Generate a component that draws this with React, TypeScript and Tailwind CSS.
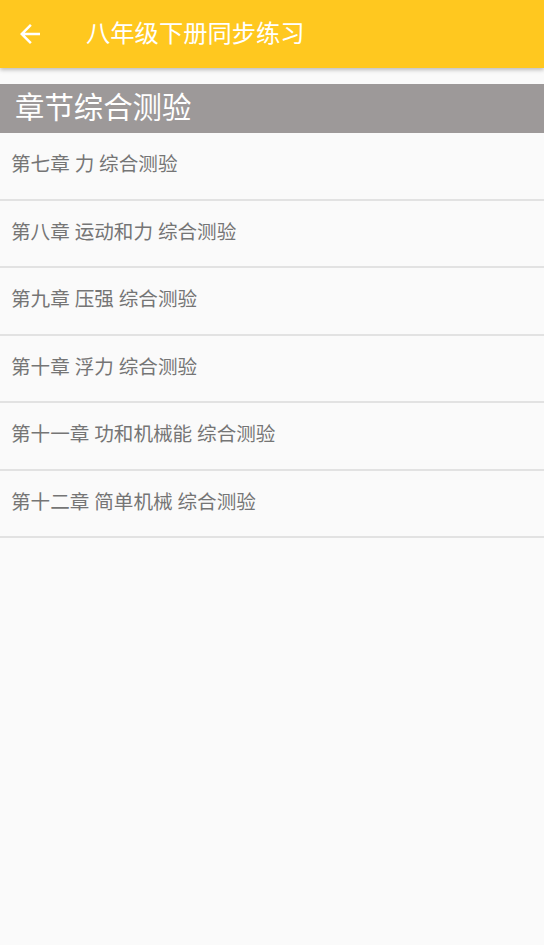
import React from 'react';

const chapters: string[] = [
    '第七章 力 综合测验',
    '第八章 运动和力 综合测验',
    '第九章 压强 综合测验',
    '第十章 浮力 综合测验',
    '第十一章 功和机械能 综合测验',
    '第十二章 简单机械 综合测验',
];

const font = { fontFamily: '"Roboto", "Noto Sans CJK SC", sans-serif' };

const App: React.FC = () => {
    return (
        <div className="min-h-[945px] w-full bg-[#fafafa]" style={font}>
            {/* toolbar */}
            <div className="relative z-10 flex h-[68px] items-center bg-[#ffc81f] shadow-[0_2px_4px_rgba(0,0,0,0.25)]">
                <div className="ml-[15px] flex h-[30px] w-[30px] items-center justify-center">
                    <svg viewBox="0 0 24 24" className="h-[30px] w-[30px]" fill="#ffffff">
                        <path d="M20 11H7.83l5.59-5.59L12 4l-8 8 8 8 1.41-1.41L7.83 13H20v-2z" />
                    </svg>
                </div>
                <div className="ml-[41px] text-[24.3px] leading-none text-white">八年级下册同步练习</div>
            </div>

            <div className="h-4" />

            {/* section header */}
            <div className="flex h-[49px] items-center bg-[#9d9999] pl-[15px] text-[29.4px] leading-none text-white">
                章节综合测验
            </div>

            {/* list */}
            <ul>
                {chapters.map((c) => (
                    <li
                        key={c}
                        className="flex h-[67.5px] items-center border-b-2 border-[#e2e2e2] pb-[1px] pl-[11px] text-[19.6px] leading-none text-[#757575]"
                    >
                        {c}
                    </li>
                ))}
            </ul>
        </div>
    );
};

export default App;
